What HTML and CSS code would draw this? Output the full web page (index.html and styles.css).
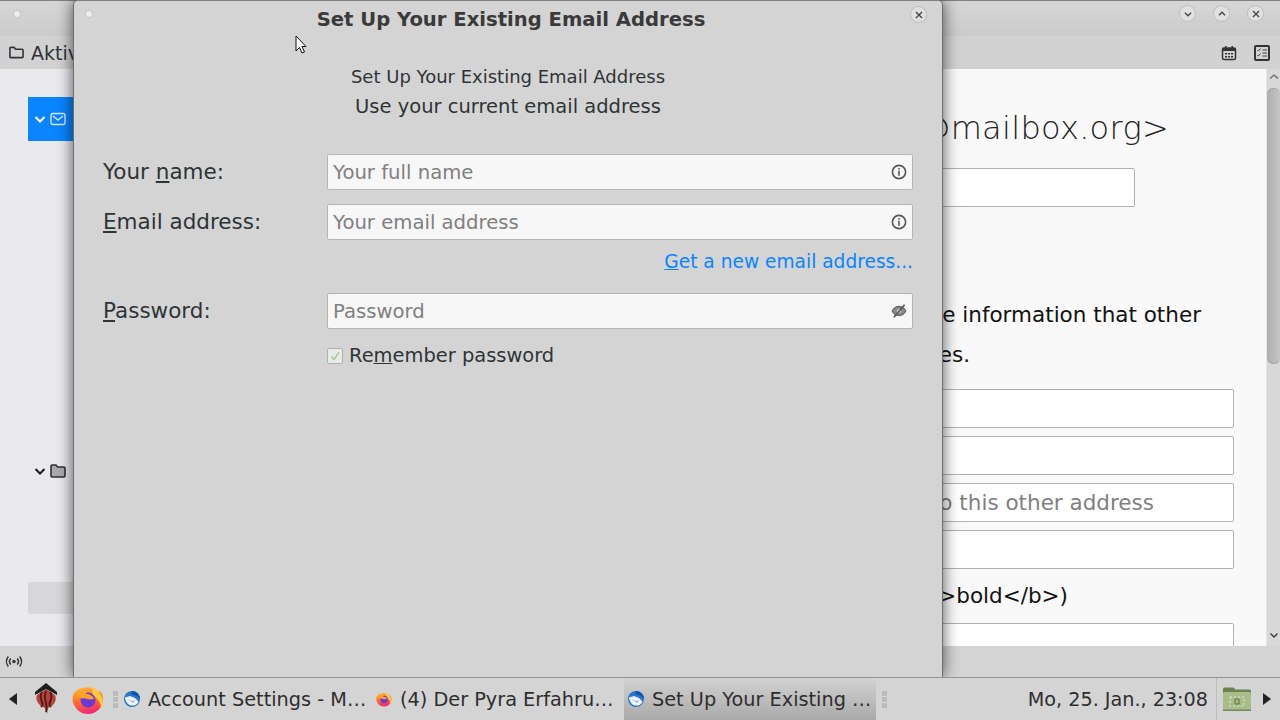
FILE: index.html
```html
<!DOCTYPE html>
<html lang="en">
<head>
<meta charset="utf-8">
<title>Set Up Your Existing Email Address</title>
<link rel="stylesheet" href="styles.css">
</head>
<body>
<div class="desktop">
  <div class="window">
    <header class="titlebar">
      <span class="dot dot-main"></span>
      <div class="wm-buttons">
        <span class="wm-btn"><svg viewBox="0 0 16 16"><path d="M4.500 6.500 8 10l3.500-3.500"/></svg></span>
        <span class="wm-btn"><svg viewBox="0 0 16 16"><path d="M4.500 9.500 8 6l3.500 3.500"/></svg></span>
        <span class="wm-btn"><svg viewBox="0 0 16 16"><path d="M4.500 4.500l7 7m0-7l-7 7"/></svg></span>
      </div>
    </header>
    <div class="toolbar">
      <svg class="tb-folder" viewBox="0 0 16 16"><path d="M1 12.500V3.500a1 1 0 0 1 1-1h3.500l1.500 2h7a1 1 0 0 1 1 1v7a1 1 0 0 1-1 1H2a1 1 0 0 1-1-1z"/></svg>
      <span class="tb-label">Aktivitäten</span>
      <span class="spacer"></span>
      <svg class="tb-icon" viewBox="0 0 16 16"><rect x="1.500" y="3" width="13" height="11.500" rx="1.500" class="ic-s"/><path class="ic-f" d="M2 3h12v3H2zM4 1h1.500v3H4zM10.500 1H12v3h-1.500z"/><path class="ic-f" d="M4 8h2v1.500H4zM7 8h2v1.500H7zM10 8h2v1.500h-2zM4 11h2v1.500H4zM7 11h2v1.500H7zM10 11h2v1.500h-2z"/></svg>
      <svg class="tb-icon" viewBox="0 0 16 16"><rect x="1" y="1" width="14" height="14" rx="1" class="ic-s ic-heavy"/><path class="ic-t" d="M3.500 5l1 1 2-2.500M3.500 10l1 1 2-2.500M8.500 5H13M8.500 8H13M8.500 11H13"/></svg>
    </div>
    <div class="workspace">
      <aside class="sidebar">
        <div class="acct acct-selected">
          <svg class="chev" viewBox="0 0 12 12"><path d="M1.500 4 6 8.500 10.500 4"/></svg>
          <svg class="mail" viewBox="0 0 16 14"><rect x="1" y="1.500" width="14" height="11" rx="2"/><path d="M3 4l5 4 5-4"/></svg>
        </div>
        <div class="acct acct-local">
          <svg class="chev dark" viewBox="0 0 12 12"><path d="M1.500 4 6 8.500 10.500 4"/></svg>
          <svg class="localfolder" viewBox="0 0 16 14"><path d="M1 12V2a1 1 0 0 1 1-1h4l1.500 2H14a1 1 0 0 1 1 1v8a1 1 0 0 1-1 1H2a1 1 0 0 1-1-1z"/></svg>
        </div>
        <div class="acct-button"></div>
      </aside>
      <main class="pane">
        <div class="pane-scroll">
          <h1 class="acct-head">Konto &lt;name@mailbox.org&gt;</h1>
          <input class="field field-short" type="text">
          <p class="identity">Each account has an identity, which is the information that other<br>people see when they read your messages.</p>
          <input class="field" type="text">
          <input class="field" type="text">
          <input class="field field-ph" type="text" placeholder="Recipients will reply to this other address">
          <input class="field" type="text">
          <p class="sig">Use HTML (e.g., &lt;b&gt;bold&lt;/b&gt;)</p>
          <input class="field" type="text">
        </div>
        <div class="scrollbar">
          <svg class="sb-arrow" viewBox="0 0 12 12"><path d="M2 7.500 6 4l4 3.500"/></svg>
          <div class="sb-thumb"></div>
          <svg class="sb-arrow sb-down" viewBox="0 0 12 12"><path d="M2.500 4.500 6 8l3.500-3.500"/></svg>
        </div>
      </main>
    </div>
    <footer class="statusbar">
      <svg class="radio" viewBox="0 0 18 12"><circle cx="9" cy="6" r="1.700"/><path d="M5.800 3a4.500 4.500 0 0 0 0 6M12.200 3a4.500 4.500 0 0 1 0 6M3.300 1a8 8 0 0 0 0 10M14.700 1a8 8 0 0 1 0 10"/></svg>
    </footer>
  </div>

  <section class="dialog">
    <header class="dlg-title">
      <span class="dot dot-dlg"></span>
      <h2 class="dlg-heading">Set Up Your Existing Email Address</h2>
      <span class="wm-btn dlg-close"><svg viewBox="0 0 16 16"><path d="M4.500 4.500l7 7m0-7l-7 7"/></svg></span>
    </header>
    <div class="intro">
      <div class="intro-1">Set Up Your Existing Email Address</div>
      <div class="intro-2">Use your current email address</div>
    </div>
    <div class="form">
      <label class="lbl">Your <u>n</u>ame:</label>
      <div class="box"><span class="ph">Your full name</span><svg class="info" viewBox="0 0 14 14"><circle cx="7" cy="7" r="5.800"/><path d="M7 6v4.200M7 3.400v1.400"/></svg></div>
      <label class="lbl"><u>E</u>mail address:</label>
      <div class="box"><span class="ph">Your email address</span><svg class="info" viewBox="0 0 14 14"><circle cx="7" cy="7" r="5.800"/><path d="M7 6v4.200M7 3.400v1.400"/></svg></div>
      <span></span>
      <a class="newmail"><u>G</u>et a new email address...</a>
      <label class="lbl lbl-pw"><u>P</u>assword:</label>
      <div class="box box-pw"><span class="ph">Password</span><svg class="info eye" viewBox="0 0 14 14"><path class="eye-o" d="M1 7c1.500-2.700 3.500-4 6-4s4.500 1.300 6 4c-1.500 2.700-3.500 4-6 4S2.500 9.700 1 7z"/><circle class="eye-c" cx="7" cy="7" r="1.800"/><path d="M2.500 12.500l9.500-11"/></svg></div>
      <span></span>
      <div class="remember"><span class="check"><svg viewBox="0 0 14 14"><path d="M3.500 7.500l2.500 3 5-7"/></svg></span><span>Re<u>m</u>ember password</span></div>
    </div>
  </section>

  <svg class="cursor" viewBox="0 0 14 20"><path d="M1 1v15l3.500-3.500 2.500 5.500 2.500-1-2.500-5.500H11z"/></svg>

  <nav class="taskbar">
    <svg class="tri" viewBox="0 0 8 12"><path d="M8 0v12L0 6z"/></svg>
    <svg class="pyra" viewBox="0 0 24 32"><path fill="#b5423a" d="M3 12l9-6 9 6c2 5 0 10-7 13l-1 6-2-6C4 22 1 17 3 12z"/><path fill="none" stroke="#4a1a17" stroke-width="1.800" d="M8 9c-3 4-1 7 0 10 1 2 0 4-1 5M12 8c-2 5-1 8 0 12s1 6 0 9M16 9c3 4 1 7 0 10-1 2 0 4 1 5"/><path fill="#1f1f1f" d="M12 0l11 9v3L12 6 1 12V9z"/></svg>
    <svg class="fx" viewBox="0 0 32 32"><use href="#firefox"/></svg>
    <span class="handle"></span>
    <div class="task"><svg class="tb-logo" viewBox="0 0 16 16"><use href="#tbird"/></svg><span class="task-text">Account Settings - M…</span></div>
    <div class="task"><svg class="tb-logo" viewBox="0 0 32 32"><use href="#firefox"/></svg><span class="task-text">(4) Der Pyra Erfahru…</span></div>
    <div class="task task-active"><svg class="tb-logo" viewBox="0 0 16 16"><use href="#tbird"/></svg><span class="task-text">Set Up Your Existing …</span></div>
    <span class="handle handle-2"></span>
    <span class="spacer"></span>
    <time class="clock">Mo, 25. Jan., 23:08</time>
    <div class="tray">
      <svg class="tray-folder" viewBox="0 0 30 26"><path fill="#6d8152" d="M1 3a1.500 1.500 0 0 1 1.500-1.500h9l2 2h14A1.500 1.500 0 0 1 29 5v4H1z"/><rect x="1" y="6" width="28" height="19" rx="1.500" fill="#a9bc8a"/><rect x="1" y="23.500" width="28" height="1.500" fill="#75875c"/><path fill="none" stroke="#e3ebd4" stroke-width="1" stroke-dasharray="2 2" d="M8 11h14v9H8z"/><path fill="none" stroke="#5c6e45" d="M13 13h4v5h-4z"/></svg>
      <svg class="tri tri-r" viewBox="0 0 8 12"><path d="M0 0v12l8-6z"/></svg>
    </div>
  </nav>

  <svg class="defs" width="0" height="0" aria-hidden="true">
    <defs>
      <linearGradient id="fxg" x1="0.300" y1="0" x2="0.500" y2="1"><stop offset="0" stop-color="#ffb52e"/><stop offset=".55" stop-color="#ff6a2b"/><stop offset="1" stop-color="#f0247c"/></linearGradient>
      <g id="firefox">
        <path fill="url(#fxg)" d="M2 10c-2 4-2 8 0 12 3 6 8 9 14 9 9 0 15-7 15-15 0-3-1-5-2-7L16 4 7 6z"/>
        <path fill="#ffcb3d" d="M20 0c0 4 3 6 6 8 3 3 5 7 5 11 0 3-1 5-2 7 0-6-3-11-9-14 1-4 1-8 0-12z"/>
        <circle cx="16" cy="17" r="7.500" fill="#6b3ad6"/>
        <path fill="#ffa12b" d="M6 6c0 2 1 3 2 4 2-2 5-3 9-2-2 1-3 2-3 3 4 0 7 2 8 5-4 1-8 0-10-1-2 1-4 0-5-2-1 1-1 2-1 3C4 13 4 9 6 6z"/>
      </g>
      <g id="tbird">
        <circle cx="8" cy="8" r="8" fill="#2a76c9"/>
        <path fill="#0f55a8" d="M8 0a8 8 0 0 1 8 8l-3-3-6-2z"/>
        <path fill="#eef3fa" d="M1 6.500l5-1.500 5 2 3.500 3.500C13 14 10 15 7.500 14.500 4 14 1.500 11 1 6.500z"/>
        <path fill="#8ab8ea" d="M4 8l4 2 3-1-2 3z"/>
      </g>
    </defs>
  </svg>
</div>
</body>
</html>
```
FILE: styles.css
```css
* { box-sizing: border-box; }
html, body { margin: 0; padding: 0; }
body {
  width: 1280px;
  height: 720px;
  overflow: hidden;
  font-family: "DejaVu Sans", sans-serif;
  color: #2e3436;
  background: #d4d4d4;
}
.desktop { position: relative; width: 1280px; height: 720px; overflow: hidden; }
.spacer { flex: 1; }
.defs { position: absolute; }
.cursor { position: absolute; left: 295px; top: 35px; width: 14px; height: 20px; z-index: 6; fill: #fff; stroke: #111; stroke-width: 1; }

/* main window */
.window { position: absolute; inset: 0 0 43px 0; display: flex; flex-direction: column; background: #d4d4d4; }
.titlebar {
  height: 36px;
  flex: none;
  display: flex;
  align-items: center;
  border-top: 1px solid #808080;
  background: linear-gradient(#d6d6d6, #cbcbcb);
  padding-left: 13px;
  padding-right: 16px;
}
.dot { width: 8px; height: 8px; border-radius: 50%; background: #eee; border: 1px solid #c4c4c4; flex: none; }
.dot-main { margin-top: -10px; }
.wm-buttons { margin-left: auto; display: flex; gap: 17px; margin-top: -10px; }
.wm-btn {
  width: 17px; height: 17px; border-radius: 50%;
  background: #e0e0e0; border: 1px solid #bdbdbd;
  display: flex; align-items: center; justify-content: center; flex: none;
}
.wm-btn svg { width: 14px; height: 14px; fill: none; stroke: #444; stroke-width: 1.500; }
.toolbar {
  height: 33px; flex: none; display: flex; align-items: center;
  background: #d2d2d2; padding-left: 9px; padding-right: 10px;
}
.tb-folder { width: 15px; height: 15px; fill: none; stroke: #2e3436; stroke-width: 1.700; margin-right: 7px; }
.tb-label { font-size: 19px; }
.tb-icon { width: 16px; height: 16px; margin-left: 17px; }
.ic-s { fill: none; stroke: #333; stroke-width: 1.500; }
.ic-heavy { stroke-width: 2; }
.ic-f { fill: #333; }
.ic-t { fill: none; stroke: #444; stroke-width: 1; }

.workspace { flex: 1; display: flex; min-height: 0; }
.sidebar { width: 240px; flex: none; background: #e9e9ee; position: relative; display: flex; flex-direction: column; }
.acct { display: flex; align-items: center; padding-left: 6px; gap: 4px; margin-left: 28px; height: 44px; }
.acct-selected { margin-top: 28px; background: #0a84ff; }
.acct-local { margin-top: 312px; height: 36px; }
.chev { width: 12px; height: 12px; fill: none; stroke: #fff; stroke-width: 2; flex: none; }
.chev.dark { stroke: #1c1c1c; }
.mail { width: 16px; height: 14px; fill: none; stroke: #d6e9ff; stroke-width: 1.400; flex: none; }
.localfolder { width: 16px; height: 14px; fill: #aaa; stroke: #2e3033; stroke-width: 1.600; flex: none; }
.acct-button { margin: 93px 0 0 28px; height: 32px; background: #d7d7db; border-radius: 2px; }

.pane { flex: 1; min-width: 0; display: flex; background: #f9f9fa; }
.pane-scroll { flex: 1; min-width: 0; overflow: hidden; padding: 35px 32px 0 261px; display: flex; flex-direction: column; align-items: flex-end; }
.acct-head {
  margin: 0 65px 0 0; font: 200 32px/48px "DejaVu Sans", sans-serif; color: #222;
  white-space: nowrap; letter-spacing: 0.300px;
}
.field {
  display: block; width: 100%; height: 39px; flex: none;
  border: 1px solid #b1b1b1; border-radius: 2px; background: #fff;
  margin-top: 8px; font: 21.500px "DejaVu Sans", sans-serif; padding: 0 8px; text-align: right;
}
.field::placeholder { color: #80807f; }
.field-ph { padding-right: 79px; }
.field-short { width: 700px; margin-top: 16px; margin-right: 99px; }
.identity { margin: 88px 0 6px; align-self: flex-start; font-size: 21.500px; line-height: 40px; white-space: nowrap; color: #111; }
.sig { margin: 12px 166px 4px 0; font-size: 21.500px; line-height: 30px; white-space: nowrap; color: #111; }
.scrollbar { width: 14px; flex: none; background: #d8d8d8; position: relative; display: flex; flex-direction: column; align-items: center; border-left: 1px solid #e4e4e4; }
.sb-arrow { width: 12px; height: 12px; fill: none; stroke: #666; stroke-width: 1.300; margin-top: 2px; flex: none; }
.sb-thumb { width: 13px; height: 276px; margin-top: 5px; background: linear-gradient(90deg, #aeaeae, #c6c6c6); border: 1px solid #a2a2a2; border-width: 1px 0; border-radius: 6px; flex: none; }
.sb-down { margin-top: auto; margin-bottom: 5px; stroke: #333; }

.statusbar { height: 31px; flex: none; background: #d4d4d4; display: flex; align-items: center; padding-left: 5px; }
.radio { width: 18px; height: 13px; fill: none; stroke: #333; stroke-width: 1.500; }
.radio circle { fill: #333; stroke: none; }

/* dialog */
.dialog {
  position: absolute; left: 73px; top: 0; width: 870px; height: 677px;
  background: #d4d4d4;
  border-left: 1px solid #6e6e6e; border-right: 1px solid #6e6e6e; border-top: 1px solid #808080;
  border-top-left-radius: 5px; border-top-right-radius: 5px;
  box-shadow: 0 0 16px rgba(0,0,0,.65);
}
.dlg-title { height: 36px; display: flex; align-items: center; position: relative; }
.dot-dlg { position: absolute; left: 11px; top: 9px; }
.dlg-heading { margin: 0 auto; font-size: 19.600px; font-weight: 700; color: #3a3a3a; padding-left: 6px; }
.dlg-close { position: absolute; right: 15px; top: 5px; }
.intro { margin-top: 25px; text-align: center; color: #2e3436; }
.intro-1 { font-size: 18px; line-height: 30px; }
.intro-2 { font-size: 19.500px; line-height: 30px; }
.form {
  margin-top: 32px; padding: 0 28px 0 28px;
  display: grid; grid-template-columns: 225px 586px; align-items: center;
}
.lbl { font-size: 21.500px; color: #2e3436; padding-left: 1px; margin-bottom: 16px; }
.box {
  height: 36px; background: #f7f7f7; border: 1px solid #b5b5b5; border-radius: 2px;
  display: flex; align-items: center; padding: 0 5px; margin-bottom: 14px;
}
.ph { font-size: 19.650px; color: #80807f; flex: 1; }
.info { width: 16px; height: 16px; fill: none; stroke: #555; stroke-width: 1.400; flex: none; }
.eye .eye-o { fill: #8a8a8a; stroke: #666; stroke-width: 1; }
.eye .eye-c { fill: #d4d4d4; stroke: none; }
.newmail { color: #0a84ff; font-size: 18.600px; text-align: right; line-height: 30px; margin-top: -7px; }
.box-pw { margin-top: 16px; margin-bottom: 0; }
.lbl-pw { margin-top: 15px; margin-bottom: 1px; }
.remember { display: flex; align-items: center; gap: 6px; font-size: 19.450px; margin-top: 15px; line-height: 24px; }
.check { width: 16px; height: 16px; border: 1px solid #b1b1b1; border-radius: 2px; background: #eaeaea; display: flex; flex: none; }
.check svg { width: 14px; height: 14px; fill: none; stroke: #9cc98a; stroke-width: 1.300; }

/* taskbar */
.taskbar {
  position: absolute; left: 0; right: 0; bottom: 0; height: 43px; z-index: 5;
  display: flex; align-items: center; background: #d4d4d4; border-top: 1px solid #969696;
}
.tri { width: 8px; height: 12px; fill: #222; flex: none; }
.taskbar > .tri { margin-left: 9px; }
.pyra { width: 24px; height: 32px; margin-left: 17px; flex: none; }
.fx { width: 32px; height: 32px; margin-left: 14px; flex: none; }
.handle { width: 5px; height: 17px; margin-left: 9px; margin-right: 2px; flex: none; background: repeating-linear-gradient(#bbb 0 5px, transparent 5px 6px); }
.task { width: 252px; height: 42px; display: flex; align-items: center; flex: none; padding-left: 4px; gap: 8px; font-size: 19.300px; white-space: nowrap; overflow: hidden; color: #2e2e2e; }
.tb-logo { width: 16px; height: 16px; flex: none; }
.task-active { background: linear-gradient(#d2d2d2, #a9a9a9); }
.handle-2 { margin-left: 6px; }
.clock { font-size: 19.200px; color: #2e2e2e; white-space: nowrap; margin-right: 8px; }
.tray { display: flex; align-items: center; height: 42px; border-left: 1px solid #bdbdbd; padding-left: 5px; flex: none; }
.tray-folder { width: 30px; height: 26px; }
.tri-r { margin-left: 11px; margin-right: 9px; }
```
